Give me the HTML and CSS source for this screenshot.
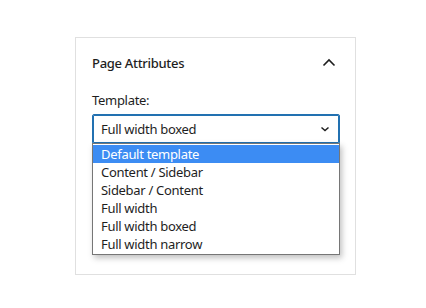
FILE: index.html
```html
<!DOCTYPE html>
<html lang="en">
<head>
  <meta charset="UTF-8">
  <title>Page Attributes</title>
  <link rel="stylesheet" href="styles.css">
</head>
<body>
  <div class="panel">
    <div class="panel-head">
      <h2 class="panel-title">Page Attributes</h2>
      <svg class="toggle" width="24" height="24" viewBox="0 0 24 24">
        <path d="M6.5 14.5l5.5-5.5 5.5 5.5" fill="none" stroke="#1e1e1e" stroke-width="1.6"/>
      </svg>
    </div>
    <div class="panel-body">
      <label class="field-label">Template:</label>
      <div class="select-wrap">
        <div class="select">
          <span>Full width boxed</span>
          <svg width="12" height="12" viewBox="0 0 12 12">
            <path d="M2.5 4.5l3.5 3 3.5-3" fill="none" stroke="#1e1e1e" stroke-width="1.5"/>
          </svg>
        </div>
        <ul class="options">
          <li class="active">Default template</li>
          <li>Content / Sidebar</li>
          <li>Sidebar / Content</li>
          <li>Full width</li>
          <li>Full width boxed</li>
          <li>Full width narrow</li>
        </ul>
      </div>
    </div>
  </div>
</body>
</html>
```
FILE: styles.css
```css
body {
  margin: 0;
  background: #fff;
  font-family: 'Noto Sans', 'Segoe UI', sans-serif;
  letter-spacing: -0.3px;
  color: #1e1e1e;
}

.panel {
  margin: 37px 0 0 75px;
  width: 281px;
  height: 238px;
  box-sizing: border-box;
  border: 1px solid #e0e0e0;
}

.panel-head {
  display: flex;
  align-items: center;
  justify-content: space-between;
  height: 49px;
  padding: 0 16px 0 16px;
}

.panel-title {
  margin: 0;
  font-size: 13px;
  font-weight: 500;
}

.toggle {
  margin-right: -2px;
}

.panel-body {
  padding: 0 16px;
}

.field-label {
  display: block;
  font-size: 13px;
  line-height: 18px;
  margin: 4px 0 5px;
}

.select-wrap {
  position: relative;
}

.select {
  display: flex;
  align-items: center;
  justify-content: space-between;
  width: 248px;
  height: 30px;
  box-sizing: border-box;
  padding: 0 8px 0 8px;
  border: 1px solid #2271b1;
  box-shadow: inset 0 0 0 1px #2271b1;
  border-radius: 2px;
  font-size: 13px;
}

.options {
  position: absolute;
  top: 29px;
  left: 0;
  width: 248px;
  box-sizing: border-box;
  margin: 0;
  padding: 1px 0;
  list-style: none;
  background: #fff;
  border: 1px solid #767676;
  box-shadow: 2px 3px 6px rgba(0, 0, 0, 0.25);
  font-size: 13px;
}

.options li {
  height: 18px;
  line-height: 18px;
  padding: 0 8px;
}

.options .active {
  background: #3c8cf3;
  color: #fff;
}
```
